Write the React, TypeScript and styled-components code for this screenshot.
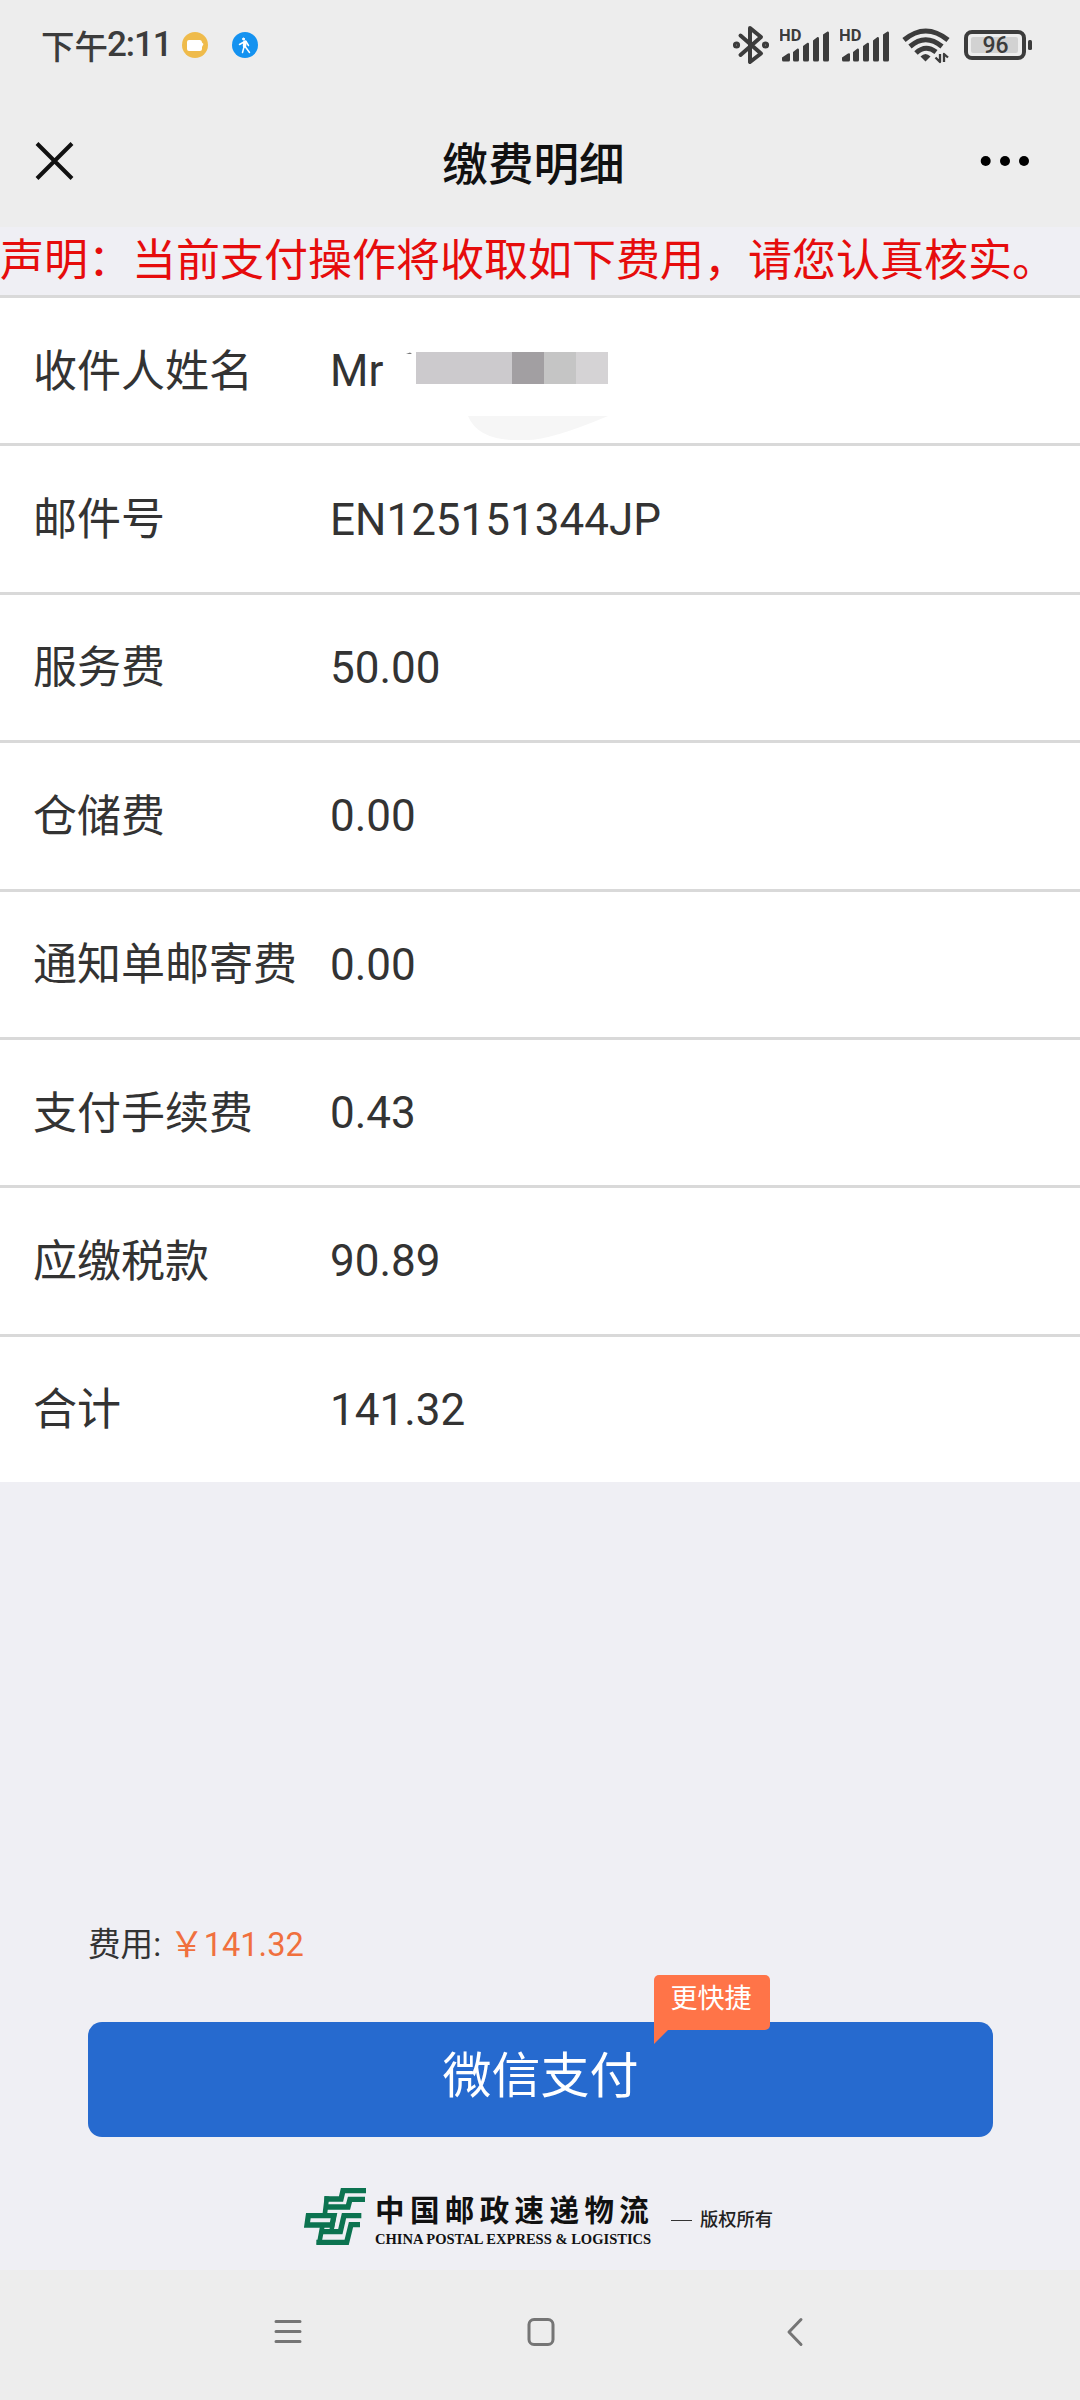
import React from "react";
import styled, { createGlobalStyle } from "styled-components";

const GlobalStyle = createGlobalStyle`
  * { box-sizing: border-box; }
  body { margin: 0; background: #efeff4; }
`;

const sans = `Roboto, "Noto Sans CJK SC", sans-serif`;
const cjk = `"Noto Sans CJK SC", sans-serif`;

const Screen = styled.div`
  width: 1080px;
  height: 2400px;
  display: flex;
  flex-direction: column;
  background: #efeff4;
  color: #333;
  font-family: ${sans};
  overflow: hidden;
`;

const StatusBar = styled.div`
  height: 92px;
  flex: none;
  display: flex;
  align-items: center;
  justify-content: space-between;
  padding: 0 47px 2px 41px;
  background: #ededed;
`;

const StatusGroup = styled.div`
  display: flex;
  align-items: center;
`;

const Clock = styled.div`
  width: 141px;
  font: 500 33.5px/40px ${cjk};
  color: #3c3c3c;
  white-space: nowrap;
  display: flex;
  align-items: center;
`;

const ClockDigits = styled.span`
  font: 500 35px/40px ${sans};
  letter-spacing: -1.1px;
  margin-left: -1px;
`;

const Glyph = styled.svg<{ $gap?: number }>`
  display: block;
  flex: none;
  margin-left: ${(p) => p.$gap ?? 0}px;
`;

const TitleBar = styled.header`
  height: 135px;
  flex: none;
  display: grid;
  grid-template-columns: 240px 1fr 240px;
  align-items: center;
  padding: 2px 50px 0 35px;
  background: #ededed;
`;

const Title = styled.h1`
  margin: 1px 0 0 2px;
  text-align: center;
  font: 500 45.6px/60px ${cjk};
  color: #111;
`;

const MoreSlot = styled.div`
  display: flex;
  justify-content: flex-end;
`;

const Notice = styled.p`
  margin: 0;
  height: 68px;
  flex: none;
  font: 400 44px/60px ${cjk};
  color: #e60c0c;
  white-space: nowrap;
`;

const List = styled.dl`
  margin: 0;
  height: 1187px;
  flex: none;
  display: grid;
  grid-template-rows: repeat(8, 1fr);
  background: #fff;
`;

const Row = styled.div`
  display: flex;
  align-items: center;
  border-top: 3px solid #d9d9d9;
  padding-left: 33px;
  position: relative;
`;

const Label = styled.dt`
  width: 297px;
  padding-bottom: 6px;
  font: 400 44px/60px ${cjk};
  color: #333;
  white-space: nowrap;
`;

const Value = styled.dd`
  margin: 0;
  padding-top: 1px;
  display: flex;
  align-items: center;
  font: 400 44px/60px ${sans};
  color: #333;
`;

const Mosaic = styled.span`
  display: flex;
  height: 32px;
  margin: -6px 0 0 33px;
`;

const Tile = styled.i<{ $w: number; $c: string }>`
  width: ${(p) => p.$w}px;
  background: ${(p) => p.$c};
`;

const Smudge = styled.svg`
  position: absolute;
  left: 401px;
  top: 50px;
`;

const Payment = styled.section`
  flex: 1;
  display: flex;
  flex-direction: column;
  padding: 440px 87px 0 88px;
`;

const Fee = styled.div`
  height: 46px;
  display: flex;
  align-items: center;
  font-size: 32.6px;
  line-height: 46px;
  white-space: pre;
  color: #333;
`;

const Amount = styled.span`
  color: #f0703e;
  display: flex;
`;

const Yen = styled.span`
  width: 34.5px;
  font-size: 35px;
  line-height: 39px;
  font-family: ${cjk};
`;

const PayButton = styled.button`
  position: relative;
  height: 115px;
  margin-top: 54px;
  padding: 0 0 15px;
  border: 0;
  border-radius: 14px;
  background: #266acf;
  color: #fff;
  font: 400 49px/70px ${cjk};
`;

const Badge = styled.span`
  position: absolute;
  left: 566px;
  top: -47px;
  width: 116px;
  height: 55px;
  padding-right: 2px;
  border-radius: 5px 5px 5px 0;
  background: #ff7448;
  text-align: center;
  font: 400 27px/44px ${cjk};
  &::after {
    content: "";
    position: absolute;
    left: 0;
    top: 55px;
    border-top: 14px solid #ff7448;
    border-right: 14px solid transparent;
  }
`;

const Footer = styled.footer`
  display: flex;
  margin: 44px 0 0 211px;
  height: 70px;
`;

const Brand = styled.div`
  width: 298px;
  padding: 9px 0 0 2px;
`;

const BrandName = styled.div`
  font: 700 29.5px/36px ${cjk};
  letter-spacing: 5.4px;
  color: #111;
  white-space: nowrap;
`;

const BrandLatin = styled.div`
  margin-top: 4px;
  font: 700 14.55px/18px "Liberation Serif", serif;
  color: #111;
  white-space: nowrap;
`;

const Rights = styled.div`
  display: flex;
  align-items: center;
  gap: 8px;
  height: 28px;
  margin-top: 23px;
  font: 500 18.3px/28px ${cjk};
  color: #222;
  &::before {
    content: "";
    width: 21px;
    height: 1px;
    margin-top: 4px;
    background: #333;
  }
`;

const NavBar = styled.nav`
  height: 130px;
  flex: none;
  display: flex;
  padding: 46px 0 0 273px;
  background: #ededed;
`;

const ink = "#3c3c3c";

const Bluetooth = () => (
  <Glyph width="36" height="40" viewBox="0 0 36 40" fill="none" stroke={ink} strokeWidth="4" strokeLinejoin="round" strokeLinecap="round">
    <path d="M7.5 10.5 28 28.5 17 37V3L28 12 7.5 30" />
    <circle cx="3.5" cy="20" r="1.6" />
    <circle cx="32.5" cy="20" r="1.6" />
  </Glyph>
);

const HdText = styled.text`
  font: 700 16.5px ${sans};
`;

const Signal = ({ gap }: { gap: number }) => (
  <Glyph $gap={gap} width="50" height="36" viewBox="0 0 50 36" fill={ink}>
    <HdText x="-1" y="14">HD</HdText>
    <path d="M2 30.5 8 26.5Q10 25.5 10 27.5V33Q10 34.5 8.5 34.5H3.5Q2 34.5 2 33ZM13 25 17.5 21.5Q19 21 19 23V33Q19 34.5 17.5 34.5H14.5Q13 34.5 13 33ZM23 19 27.5 15.8Q29 15.5 29 17V33Q29 34.5 27.5 34.5H24.5Q23 34.5 23 33ZM33 13.5 37.5 10Q39 9.5 39 11.5V33Q39 34.5 37.5 34.5H34.5Q33 34.5 33 33ZM43 7.5 47.5 4.5Q49 4 49 6V33Q49 34.5 47.5 34.5H44.5Q43 34.5 43 33Z" />
  </Glyph>
);

const Wifi = () => (
  <Glyph $gap={12} width="48" height="38" viewBox="0 0 48 38" fill="none" stroke={ink} strokeWidth="5">
    <path d="M2 14Q23.5-4 46 14M8 20.5Q23.5 7 40 20.5M14 27Q23.5 18 34 26" />
    <path d="M23.5 35.5 18.5 30.5Q23.5 25.5 28.5 30.5Z" fill={ink} stroke="none" />
    <path d="M38 28V36L33.5 31.5M42 36V28L46 31.5" strokeWidth="2.3" strokeLinejoin="round" />
  </Glyph>
);

const BatteryText = styled.text`
  font: 500 23px ${sans};
`;

const Battery = () => (
  <Glyph $gap={14} width="69" height="32" viewBox="0 0 69 32">
    <rect x="2" y="3" width="58" height="26" rx="6" fill="none" stroke={ink} strokeWidth="4" />
    <rect x="7" y="8" width="47" height="16" rx="2" fill="#d2d2d2" />
    <rect x="64" y="11" width="4" height="10" rx="1.5" fill={ink} />
    <BatteryText x="31.5" y="24.3" textAnchor="middle" fill={ink}>96</BatteryText>
  </Glyph>
);

const CameraDot = () => (
  <Glyph width="26" height="26" viewBox="0 0 26 26">
    <circle cx="13" cy="13" r="13" fill="#efbb4b" />
    <path d="M7 8H18Q20 8 20 10.5L21.5 12 20 15V17Q20 19 18 19H7Q5 19 5 17V10Q5 8 7 8Z" fill="#fff" />
  </Glyph>
);

const WalkerDot = () => (
  <Glyph $gap={24} width="26" height="26" viewBox="0 0 26 26">
    <circle cx="13" cy="13" r="13" fill="#1492f0" />
    <g fill="none" stroke="#fff" strokeLinecap="round" strokeLinejoin="round">
      <circle cx="11.5" cy="7" r="1" fill="#fff" strokeWidth="1" />
      <path d="M13 10 12.5 14" strokeWidth="3.5" />
      <path d="M12 10 7.5 12.5M14 9.5 16.5 13.5M12 15 10.5 20.5M13.5 15 17.5 20.5" strokeWidth="1.5" />
    </g>
  </Glyph>
);

const PostalMark = () => (
  <Glyph width="74" height="70" viewBox="0 0 222 210">
    <g fill="none" stroke="#0c7350" strokeWidth="16">
      <path d="M201 29H132L126 54H76M198 55H153L147 78H76" />
      <path d="M84 46 77 104M70 136 60 190" strokeWidth="14" />
      <path d="M28 104H105L99 132H24Z" />
      <path d="M187 104H135L124 152H64M183 131H156L143 184H52" />
      <path d="M106 100 97 152" strokeWidth="13" />
    </g>
  </Glyph>
);

const fees: [string, string][] = [
  ["收件人姓名", "Mr"],
  ["邮件号", "EN125151344JP"],
  ["服务费", "50.00"],
  ["仓储费", "0.00"],
  ["通知单邮寄费", "0.00"],
  ["支付手续费", "0.43"],
  ["应缴税款", "90.89"],
  ["合计", "141.32"],
];

export default function App() {
  return (
    <Screen>
      <GlobalStyle />
      <StatusBar>
        <StatusGroup>
          <Clock>
            下午<ClockDigits>2:11</ClockDigits>
          </Clock>
          <CameraDot />
          <WalkerDot />
        </StatusGroup>
        <StatusGroup>
          <Bluetooth />
          <Signal gap={11} />
          <Signal gap={10} />
          <Wifi />
          <Battery />
        </StatusGroup>
      </StatusBar>
      <TitleBar>
        <Glyph width="39" height="40" viewBox="0 0 39 40" fill="none" stroke="#111" strokeWidth="4">
          <path d="M2 2.5 37 37.5M37 2.5 2 37.5" />
        </Glyph>
        <Title>缴费明细</Title>
        <MoreSlot>
          <Glyph width="50" height="12" viewBox="0 0 50 12">
            <circle cx="5.7" cy="6" r="5" />
            <circle cx="25" cy="6" r="5" />
            <circle cx="44" cy="6" r="5" />
          </Glyph>
        </MoreSlot>
      </TitleBar>
      <Notice>声明：当前支付操作将收取如下费用，请您认真核实。</Notice>
      <List>
        {fees.map(([label, value], i) => (
          <Row key={label}>
            {i === 0 && (
              <Smudge width="220" height="96" viewBox="0 0 220 96">
                <path d="M5 6 9 4.5 11 6Z" fill="#777" />
                <path d="M67 68H207Q150 92 126 92H110Q76 90 67 68Z" fill="#f6f6f6" />
              </Smudge>
            )}
            <Label>{label}</Label>
            <Value>
              {value}
              {i === 0 && (
                <Mosaic>
                  <Tile $w={96} $c="#cccacd" />
                  <Tile $w={32} $c="#a29fa2" />
                  <Tile $w={32} $c="#c5c5c5" />
                  <Tile $w={32} $c="#d5d3d5" />
                </Mosaic>
              )}
            </Value>
          </Row>
        ))}
      </List>
      <Payment>
        <Fee>
          费用:{" "}
          <Amount>
            <Yen>￥</Yen>141.32
          </Amount>
        </Fee>
        <PayButton>
          微信支付
          <Badge>更快捷</Badge>
        </PayButton>
        <Footer>
          <PostalMark />
          <Brand>
            <BrandName>中国邮政速递物流</BrandName>
            <BrandLatin>CHINA POSTAL EXPRESS &amp; LOGISTICS</BrandLatin>
          </Brand>
          <Rights>版权所有</Rights>
        </Footer>
      </Payment>
      <NavBar>
        <Glyph width="30" height="32" viewBox="0 0 30 32" stroke="#757575" strokeWidth="3" strokeLinecap="round">
          <path d="M3 5.5H27M3 15.5H27M3 25.5H27" />
        </Glyph>
        <Glyph $gap={223} width="30" height="32" viewBox="0 0 30 32" fill="none" stroke="#757575" strokeWidth="3">
          <rect x="3" y="3.5" width="24" height="25" rx="5" />
        </Glyph>
        <Glyph $gap={230} width="18" height="32" viewBox="0 0 18 32" fill="none" stroke="#757575" strokeWidth="3" strokeLinecap="round" strokeLinejoin="round">
          <path d="M15 3.5 3 16 15 28.5" />
        </Glyph>
      </NavBar>
    </Screen>
  );
}
